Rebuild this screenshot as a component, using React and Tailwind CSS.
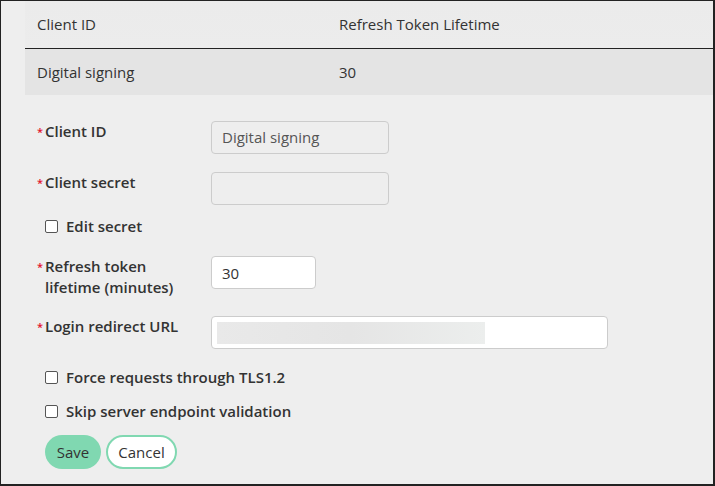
import { useState } from "react";

const Required = () => (
  <span className="w-[8px] shrink-0 text-[11px] leading-[21px] text-[#e3122b]">*</span>
);

const Checkbox = ({ label, checked, onChange }) => (
  <label className="flex items-center h-[21px] pl-[8px] gap-[8px] font-semibold text-[#333] cursor-pointer">
    <input
      type="checkbox"
      checked={checked}
      onChange={onChange}
      className="appearance-none w-[13px] h-[13px] rounded-[2px] border border-[#555] bg-white checked:bg-[#333]"
    />
    <span>{label}</span>
  </label>
);

const App = () => {
  const [editSecret, setEditSecret] = useState(false); // toggles secret field
  const [forceTls, setForceTls] = useState(false);
  const [skipValidation, setSkipValidation] = useState(false);
  const [lifetime, setLifetime] = useState("30");

  return (
    <div
      className="w-[715px] h-[486px] overflow-hidden bg-[#eeeeee] border-l border-t border-r-2 border-b-2 border-[#222] text-[15px] text-[#333]"
      style={{ fontFamily: '"Open Sans", "Liberation Sans", sans-serif' }}
    >
      {/* Clients table */}
      <div className="ml-[24px] bg-gradient-to-b from-[#ebebeb] to-[#ededed]">
        <div className="flex h-[48px] items-center border-b border-[#222]">
          <div className="w-[302px] px-[12px]">Client ID</div>
          <div className="px-[12px]">Refresh Token Lifetime</div>
        </div>
        <div className="flex h-[46px] items-center bg-[#e4e4e4]">
          <div className="w-[302px] px-[12px]">Digital signing</div>
          <div className="px-[12px]">30</div>
        </div>
      </div>

      {/* Edit form */}
      <div className="pl-[36px] pt-[26px]">
        <div className="flex items-start">
          <div className="flex w-[174px] font-semibold leading-[21px]">
            <Required />
            <span>Client ID</span>
          </div>
          <div className="flex items-center h-[33px] w-[178px] rounded-[4px] border border-[#ccc] bg-[#eeeeee] px-[10px] text-[#555]">
            Digital signing
          </div>
        </div>

        <div className="flex items-start mt-[18px]">
          <div className="flex w-[174px] font-semibold leading-[21px]">
            <Required />
            <span>Client secret</span>
          </div>
          <div className="h-[33px] w-[178px] rounded-[4px] border border-[#ccc] bg-[#eeeeee]" />
        </div>

        <div className="mt-[11px]">
          <Checkbox
            label="Edit secret"
            checked={editSecret}
            onChange={() => setEditSecret(!editSecret)}
          />
        </div>

        <div className="flex items-start mt-[19px]">
          <div className="flex w-[174px] font-semibold leading-[21px]">
            <Required />
            <span className="w-[136px]">Refresh token lifetime (minutes)</span>
          </div>
          <input
            value={lifetime}
            onChange={(e) => setLifetime(e.target.value)}
            className="h-[33px] w-[105px] rounded-[4px] border border-[#ccc] bg-white px-[10px] text-[#333] outline-none"
          />
        </div>

        <div className="flex items-start mt-[18px]">
          <div className="flex w-[174px] font-semibold leading-[21px]">
            <Required />
            <span>Login redirect URL</span>
          </div>
          <div className="flex items-center h-[33px] w-[397px] rounded-[4px] border border-[#ccc] bg-white px-[5px]">
            <div className="h-[22px] w-[268px] bg-gradient-to-r from-[#e9e9e9] via-[#e5e5e5] to-[#eceeed]" />
          </div>
        </div>

        <div className="mt-[18px]">
          <Checkbox
            label="Force requests through TLS1.2"
            checked={forceTls}
            onChange={() => setForceTls(!forceTls)}
          />
        </div>
        <div className="mt-[13px]">
          <Checkbox
            label="Skip server endpoint validation"
            checked={skipValidation}
            onChange={() => setSkipValidation(!skipValidation)}
          />
        </div>

        <div className="flex gap-[5px] mt-[13px] pl-[8px]">
          <button className="h-[34px] w-[56px] rounded-full bg-[#80d8b1] text-[#333] cursor-pointer">
            Save
          </button>
          <button className="h-[34px] w-[71px] rounded-full border-2 border-[#80d8b1] bg-white text-[#333] cursor-pointer">
            Cancel
          </button>
        </div>
      </div>
    </div>
  );
};

export default App;
